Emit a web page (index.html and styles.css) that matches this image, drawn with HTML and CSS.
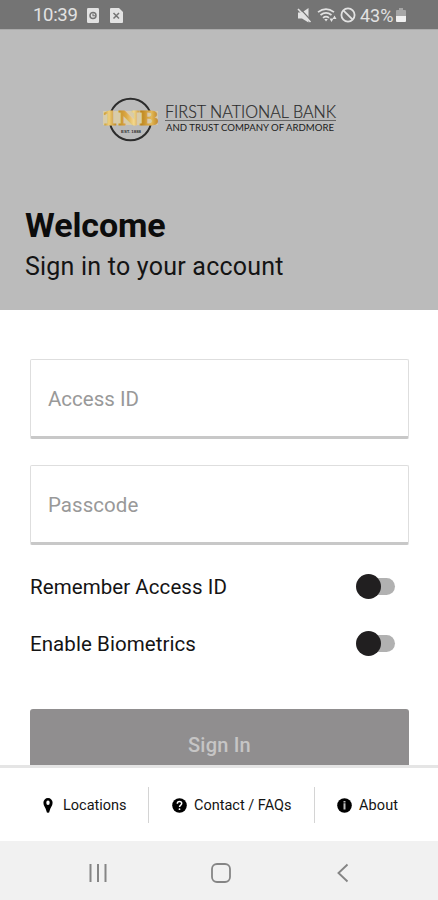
FILE: index.html
```html
<!DOCTYPE html>
<html lang="en">
<head>
<meta charset="utf-8">
<title>First National Bank - Sign In</title>
<link rel="stylesheet" href="styles.css">
</head>
<body>
<div class="screen">
  <div class="status">
    <span class="time">10:39</span>
    <svg class="s-doc" width="12" height="15" viewBox="0 0 12 15"><rect width="12" height="15" rx="1.2" fill="#e2e2e2"/><circle cx="6" cy="7.5" r="3" fill="none" stroke="#747474" stroke-width="1.5"/><path d="M6 5.5v2.2h2.5" fill="none" stroke="#747474" stroke-width="1.1"/></svg>
    <svg class="s-file" width="13" height="15" viewBox="0 0 13 15"><path d="M1 0h8l4 4v10a1 1 0 0 1-1 1H1a1 1 0 0 1-1-1V1a1 1 0 0 1 1-1z" fill="#e2e2e2"/><path d="M3.5 5l5.500 5.500M9 5l-5.500 5.500" stroke="#747474" stroke-width="1.500"/></svg>
    <span class="grow"></span>
    <svg class="s-mute" width="15" height="15" viewBox="0 0 15 15"><path d="M1 4.500h4L11.500 0v14.500L5 10.500H1z" fill="#e2e2e2"/><path d="M2.500 0l12 13" stroke="#747474" stroke-width="1.200"/><path d="M1 1l12.500 13" stroke="#e2e2e2" stroke-width="1.600"/></svg>
    <svg class="s-wifi" width="20" height="15" viewBox="0 0 20 15"><g fill="none" stroke="#e2e2e2" stroke-width="1.700"><path d="M1 4.200q8-6.200 16 0M3.500 7q5.500-4.200 11 0M6 9.800q3-2.400 6 0"/></g><path d="M7.300 11h3.500L9 13.500z" fill="#e2e2e2"/><path d="M12.500 10.500h4l-2 3.500zM15.500 11l2-3.500 2 3.500z" fill="#e2e2e2"/></svg>
    <svg class="s-block" width="16" height="16" viewBox="0 0 16 16"><g fill="none" stroke="#e2e2e2" stroke-width="1.800"><circle cx="8" cy="8" r="6.600"/><path d="M3.300 3.300l9.400 9.400"/></g></svg>
    <span class="pct">43%</span>
    <svg class="s-bat" width="10" height="14" viewBox="0 0 10 14"><path d="M3 0h4v2h2a1 1 0 0 1 1 1v6H0V3a1 1 0 0 1 1-1h2z" fill="#a6a6a6"/><path d="M0 8h10v5a1 1 0 0 1-1 1H1a1 1 0 0 1-1-1z" fill="#f0f0f0"/></svg>
  </div>
  <header class="hero">
    <svg class="logo" width="245" height="50" viewBox="0 0 245 50">
      <defs><linearGradient id="gold" gradientUnits="userSpaceOnUse" x1="2" x2="60" y1="0" y2="0"><stop offset="0" stop-color="#b98116"/><stop offset=".12" stop-color="#f0cf7c"/><stop offset=".25" stop-color="#bd871f"/><stop offset=".42" stop-color="#dca945"/><stop offset=".55" stop-color="#f3d88f"/><stop offset=".68" stop-color="#bd851d"/><stop offset=".85" stop-color="#e4b757"/><stop offset="1" stop-color="#b57d18"/></linearGradient></defs>
      <circle cx="30.500" cy="24.500" r="20.800" fill="none" stroke="#2c2c2c" stroke-width="2"/>
      <path d="M3 16h55v14H3z" fill="#d8ccaa"/>
      <text class="inb" x="2" y="29.700" textLength="57" lengthAdjust="spacingAndGlyphs" fill="url(#gold)" stroke="url(#gold)" stroke-width=".8">1NB</text>
      <text class="est" x="21" y="38" textLength="20" lengthAdjust="spacingAndGlyphs">EST. 1888</text>
      <text class="bank" x="65" y="22.500" textLength="171" lengthAdjust="spacingAndGlyphs">FIRST NATIONAL BANK</text>
      <path d="M65 25.500h171" stroke="#666" stroke-width="1"/>
      <text class="trust" x="66" y="35.500" textLength="168" lengthAdjust="spacingAndGlyphs">AND TRUST COMPANY OF ARDMORE</text>
    </svg>
    <h1>Welcome</h1>
    <p>Sign in to your account</p>
  </header>
  <main class="form">
    <div class="field"><span>Access ID</span></div>
    <div class="field"><span class="pass">Passcode</span></div>
    <div class="option"><span>Remember Access ID</span><i class="toggle"></i></div>
    <div class="option"><span class="bio">Enable Biometrics</span><i class="toggle"></i></div>
    <div class="signin"><span>Sign In</span></div>
  </main>
  <footer class="links">
    <div class="link loc"><svg width="10" height="14" viewBox="0 0 10 14"><path fill-rule="evenodd" d="M5 0a4.600 4.600 0 0 1 4.600 4.700C9.600 8 7.300 9.500 6.500 13.200a1.500 1.500 0 0 1-3 0C2.700 9.500.4 8 .4 4.700A4.600 4.600 0 0 1 5 0zm0 2.600a1.700 2.200 0 1 0 0 4.400 1.700 2.200 0 0 0 0-4.400z"/></svg><span>Locations</span></div>
    <div class="link faq"><svg width="15" height="15" viewBox="0 0 15 15"><circle cx="7.500" cy="7.500" r="7.300"/><path d="M5.300 5.800q0-2.200 2.200-2.200t2.200 2c0 1.500-2.200 1.500-2.200 3.400" fill="none" stroke="#fff" stroke-width="1.500"/><circle cx="7.500" cy="11.200" r=".9" fill="#fff"/></svg><span>Contact / FAQs</span></div>
    <div class="link about"><svg width="15" height="15" viewBox="0 0 15 15"><circle cx="7.500" cy="7.500" r="7.300"/><path d="M7.500 3v1.600M7.500 5.200v6.300" stroke="#bbb" stroke-width="2"/></svg><span>About</span></div>
  </footer>
  <nav class="nav">
    <svg width="18" height="20" viewBox="0 0 18 20"><path d="M1.500 1v18M9 1v18M16.500 1v18" stroke="#858585" stroke-width="2"/></svg>
    <svg class="home" width="20" height="20" viewBox="0 0 20 20"><rect x="1" y="1" width="18" height="18" rx="5" fill="none" stroke="#858585" stroke-width="1.800"/></svg>
    <svg width="12" height="20" viewBox="0 0 12 20"><path d="M10.500 1.500L1.500 10l9 8.500" fill="none" stroke="#858585" stroke-width="1.900"/></svg>
  </nav>
</div>
</body>
</html>
```
FILE: styles.css
```css
* { box-sizing: border-box; }
body { margin: 0; font-family: Roboto, "Liberation Sans", sans-serif; color: #141414; background: #fff; }
svg { display: block; flex: none; overflow: visible; }
.screen { display: flex; flex-direction: column; width: 438px; height: 900px; overflow: hidden; }
.status { display: flex; align-items: center; height: 29px; flex: none; padding: 1px 32px 0 33px; background: #747474; color: #e2e2e2; }
.time { width: 54px; font-size: 18.500px; letter-spacing: -.3px; }
.s-file { margin-left: 11px; }
.grow { flex: 1; }
.s-wifi { margin-left: 5px; }
.s-block { margin-left: 3px; }
.pct { width: 35px; margin: 0 1px 0 4px; font-size: 18px; }
.hero { height: 281px; flex: none; padding: 65px 25px 0; background: #bbb; border-top: 1px solid #aaa; }
.logo { margin-left: 75px; }
.inb { font: 700 18px "DejaVu Serif", serif; }
.est { font: 700 4px "Liberation Sans", sans-serif; fill: #333; }
.bank { font: 300 17px Lato, sans-serif; fill: #2a2a2a; stroke: #2a2a2a; stroke-width: .2px; }
.trust { font: 400 9px Lato, sans-serif; fill: #1c1c1c; }
h1 { margin: 60px 0 0; font-size: 34px; line-height: 40px; font-weight: 700; letter-spacing: -.1px; color: #0c0c0c; }
.hero p { margin: 7px 0 0; font-size: 25px; line-height: 30px; letter-spacing: .22px; }
.form { flex: 1; min-height: 0; overflow: hidden; padding: 49px 29px 0 30px; }
.field { display: flex; align-items: center; height: 80px; margin-bottom: 26px; padding: 1px 17px 0; border: 1px solid #dedede; border-bottom: 3px solid #c8c8c8; border-radius: 2px; color: #999; font-size: 20.500px; }
.pass { letter-spacing: .05px; }
.option { display: flex; align-items: center; justify-content: space-between; height: 57px; padding-right: 14px; font-size: 20.500px; letter-spacing: .07px; }
.field + .option { margin-top: -13px; }
.toggle { position: relative; width: 36px; height: 17px; border-radius: 9px; background: #b1b1b1; }
.toggle::before { content: ""; position: absolute; left: -3px; top: -4px; width: 25px; height: 25px; border-radius: 50%; background: #211f20; }
.signin { display: flex; justify-content: center; height: 80px; margin-top: 37px; padding-top: 23px; background: #908e8f; border-radius: 3px; color: #c6c5c5; font-size: 20px; line-height: 26px; font-weight: 500; letter-spacing: .2px; }
.links { display: grid; grid-template-columns: 149px 166px 1fr; align-items: center; height: 76px; flex: none; padding-top: 1px; border-top: 3px solid #e5e5e5; font-size: 14.500px; }
.link { display: flex; align-items: center; height: 36px; border-right: 1px solid #d4d4d4; }
.about { border-right: 0; padding-left: 22px; }
.loc { padding-left: 43px; }
.faq { padding-left: 23px; }
.link span { padding-top: 1px; }
.loc span { margin-left: 10px; }
.faq span, .about span { margin-left: 7px; }
.about span { letter-spacing: .1px; }
.nav { display: flex; height: 59px; flex: none; align-items: center; padding: 4px 89px 0; justify-content: space-between; background: #f1f1f1; }
.home { margin-right: 2px; }
```
